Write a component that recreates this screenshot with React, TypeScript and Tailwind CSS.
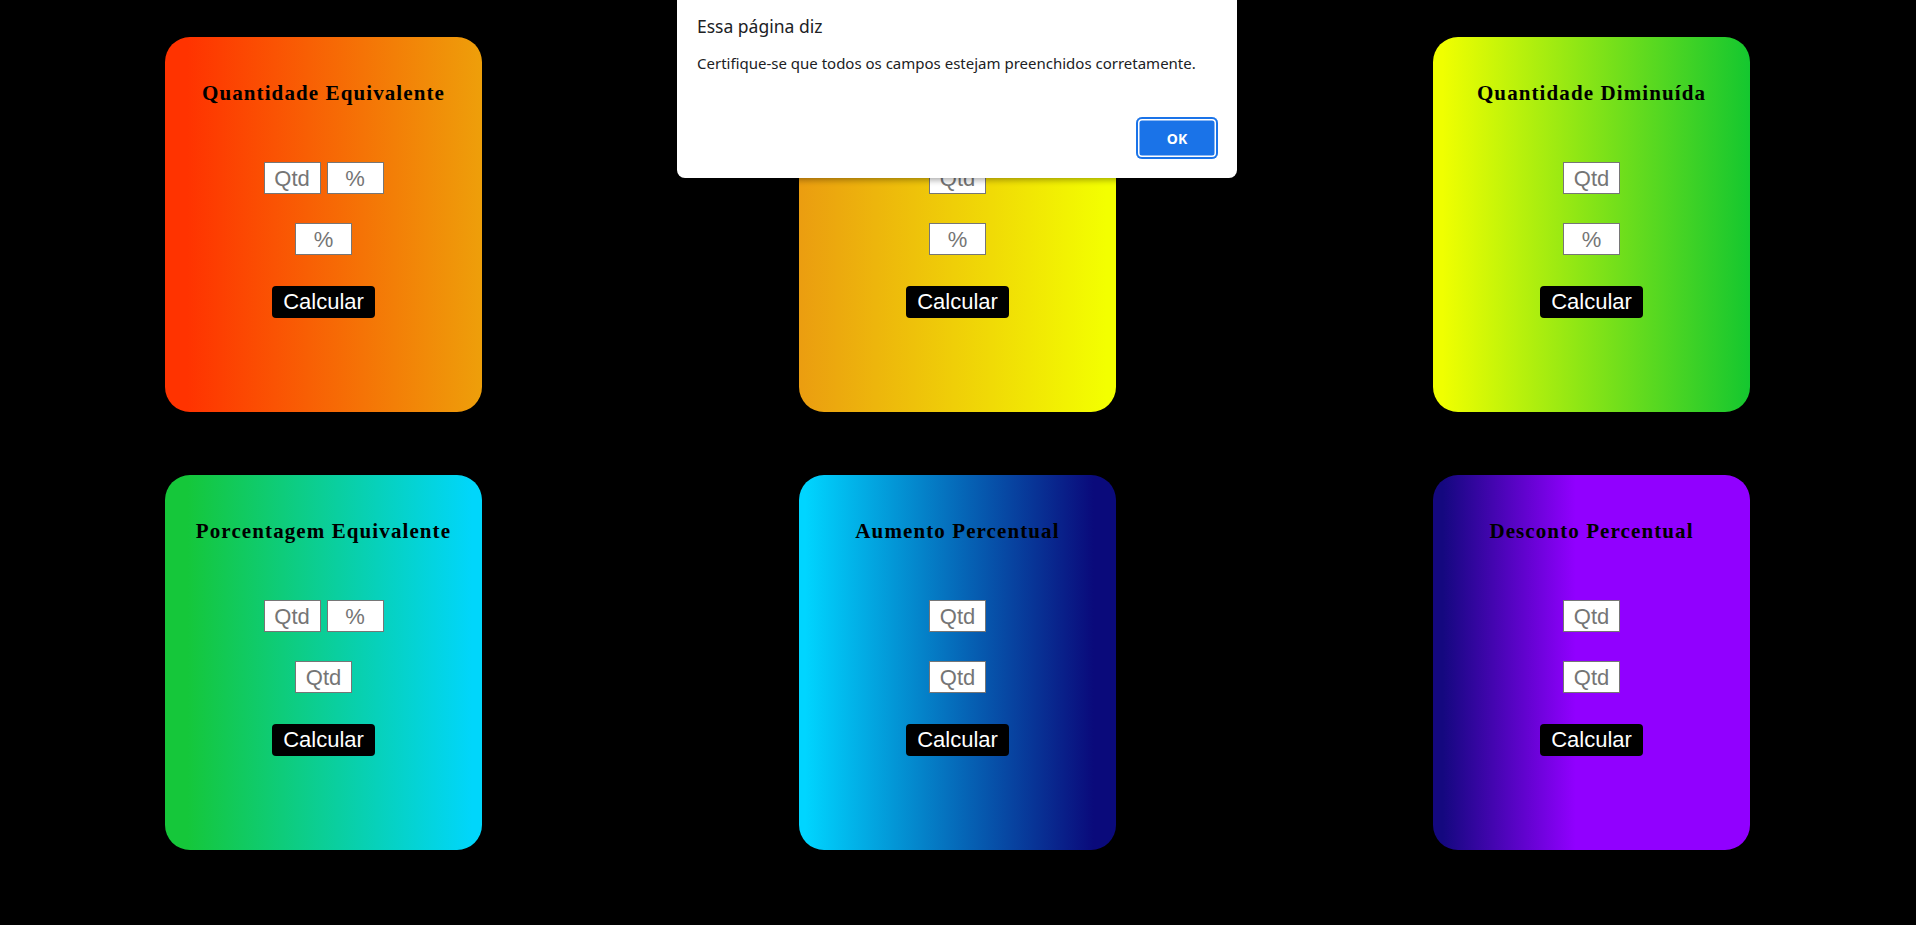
import React from "react";

type Card = {
  title: string;
  row1: string[];
  row2: string;
  bg: string;
};

const cards: Card[] = [
  { title: "Quantidade Equivalente", row1: ["Qtd", "%"], row2: "%", bg: "bg-[linear-gradient(to_right,#ff3300_7%,#ee9f0a)]" },
  { title: "Quantidade Aumentada", row1: ["Qtd"], row2: "%", bg: "bg-[linear-gradient(to_right,#eb9d10,#f3ff00_97%)]" },
  { title: "Quantidade Diminuída", row1: ["Qtd"], row2: "%", bg: "bg-[linear-gradient(to_right,#f0ff00_3%,#14c72f)]" },
  { title: "Porcentagem Equivalente", row1: ["Qtd", "%"], row2: "Qtd", bg: "bg-[linear-gradient(to_right,#15c73a_7%,#00d6fb_97%)]" },
  { title: "Aumento Percentual", row1: ["Qtd"], row2: "Qtd", bg: "bg-[linear-gradient(to_right,#00d5ff_2%,#0a0a7b_93%)]" },
  { title: "Desconto Percentual", row1: ["Qtd"], row2: "Qtd", bg: "bg-[linear-gradient(to_right,#14087f_3%,#9100ff_45%)]" },
];

const Field = ({ ph }: { ph: string }) => (
  <input
    placeholder={ph}
    className="h-[32px] w-[57px] border border-[#767676] bg-white text-center font-['Liberation_Sans',Arial,sans-serif] text-[22px] text-black placeholder:text-[#757575] outline-none"
  />
);

const CalcCard = ({ card }: { card: Card }) => (
  <div className={`flex h-[375px] w-[317px] flex-col items-center rounded-[25px] pt-[45px] ${card.bg}`}>
    <h2 className="font-['Liberation_Serif','Times_New_Roman',serif] text-[21px] font-bold leading-[23px] tracking-[1.1px] text-black">
      {card.title}
    </h2>
    <div className="mt-[57px] flex gap-[6px]">
      {card.row1.map((p, i) => (
        <Field key={i} ph={p} />
      ))}
    </div>
    <div className="mt-[29px]">
      <Field ph={card.row2} />
    </div>
    <button className="mt-[31px] h-[32px] rounded-[4px] bg-black px-[11px] font-['Liberation_Sans',Arial,sans-serif] text-[22px] leading-none text-white">
      Calcular
    </button>
  </div>
);

export default function App() {
  return (
    <div className="relative min-h-[925px] w-full bg-black">
      <div className="grid grid-cols-[317px_317px_317px] gap-x-[317px] gap-y-[63px] pl-[165px] pt-[37px]">
        {cards.map((c) => (
          <CalcCard key={c.title} card={c} />
        ))}
      </div>

      {/* alert box */}
      <div className="absolute left-[677px] top-0 h-[178px] w-[560px] rounded-b-[8px] bg-white font-['Noto_Sans','Open_Sans',sans-serif] shadow-[0_2px_6px_rgba(0,0,0,0.35)]">
        <div className="px-[20px] pt-[14px] text-[17.5px] leading-[24px] text-[#202124]">Essa página diz</div>
        <div className="px-[20px] pt-[15px] text-[15px] leading-[20px] text-[#202124]">
          Certifique-se que todos os campos estejam preenchidos corretamente.
        </div>
        <button className="absolute bottom-[19px] right-[19px] h-[42px] w-[82px] rounded-[6px] bg-[#1a73e8] text-[14px] font-bold text-white shadow-[inset_0_0_0_2px_#1a73e8,inset_0_0_0_3.5px_white]">
          OK
        </button>
      </div>
    </div>
  );
}
